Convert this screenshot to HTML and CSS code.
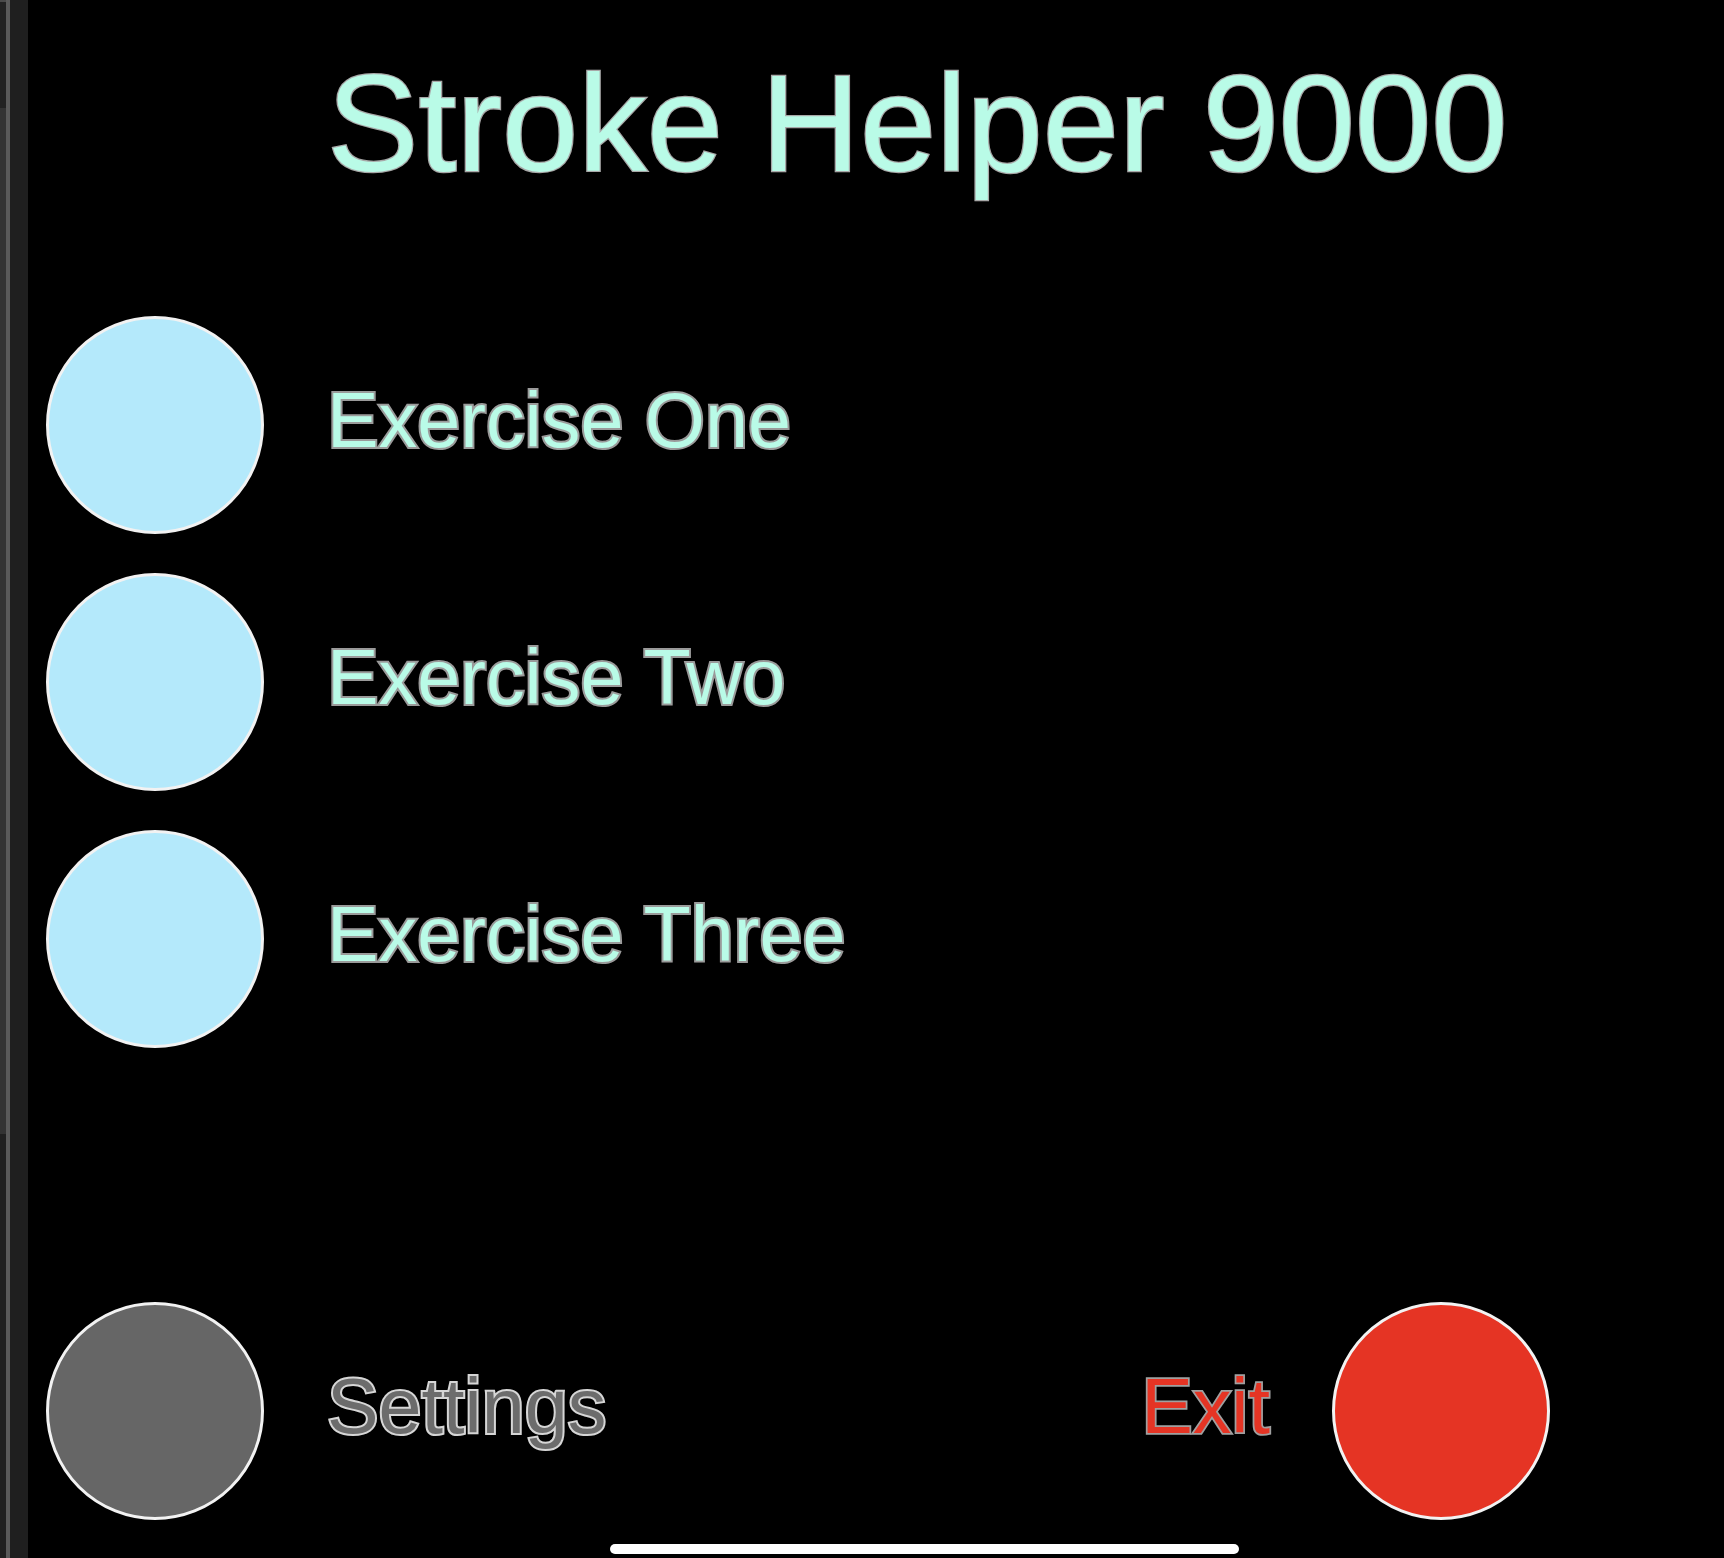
FILE: index.html
```html
<!DOCTYPE html>
<html lang="en">
<head>
<meta charset="utf-8">
<title>Stroke Helper 9000</title>
<link rel="stylesheet" href="styles.css">
</head>
<body>
  <div class="frame">
    <aside class="edge">
      <div class="edge-strip">
        <div class="strip-top"></div>
        <div class="strip-mid"></div>
        <div class="strip-bottom"></div>
      </div>
      <div class="edge-rail"></div>
      <div class="edge-gutter"></div>
    </aside>
    <main class="screen">
      <h1 class="title">Stroke Helper 9000</h1>
      <section class="menu">
        <div class="item">
          <div class="dot dot-blue"></div>
          <span class="label label-mint">Exercise One</span>
        </div>
        <div class="item">
          <div class="dot dot-blue"></div>
          <span class="label label-mint">Exercise Two</span>
        </div>
        <div class="item">
          <div class="dot dot-blue"></div>
          <span class="label label-mint">Exercise Three</span>
        </div>
      </section>
      <footer class="bottom">
        <div class="item">
          <div class="dot dot-gray"></div>
          <span class="label label-gray">Settings</span>
        </div>
        <div class="item item-exit">
          <span class="label label-red">Exit</span>
          <div class="dot dot-red"></div>
        </div>
      </footer>
      <div class="home-bar"></div>
    </main>
  </div>
</body>
</html>
```
FILE: styles.css
```css
html, body {
  margin: 0;
  padding: 0;
  background: #000;
  height: 1558px;
  overflow: hidden;
}

.frame {
  display: flex;
  height: 1558px;
}

.edge {
  display: flex;
  width: 28px;
  flex: none;
}

.edge-strip {
  width: 6px;
  display: flex;
  flex-direction: column;
}

.strip-top {
  height: 108px;
  background: #222;
  border-top: 2px solid #4a4a4a;
  box-sizing: border-box;
}

.strip-mid {
  height: 1026px;
  background: #333;
}

.strip-bottom {
  flex: 1;
  background: #202020;
}

.edge-rail {
  width: 4px;
  background: #5a5a5a;
}

.edge-gutter {
  width: 18px;
  background: #1f1f1f;
}

.screen {
  flex: 1;
  display: flex;
  flex-direction: column;
  padding-left: 18px;
  font-family: "Liberation Sans", Arial, Helvetica, sans-serif;
}

.title {
  margin: 55px 0 0 281px;
  font-size: 137px;
  line-height: 1;
  height: 137px;
  font-weight: 400;
  color: #b9fbe7;
  -webkit-text-stroke: 2.6px #a8a8a8;
  paint-order: stroke fill;
  white-space: nowrap;
}

.menu {
  margin-top: 124px;
  display: flex;
  flex-direction: column;
  gap: 39px;
}

.item {
  display: flex;
  align-items: center;
  gap: 63px;
}

.dot {
  width: 218px;
  height: 218px;
  border-radius: 50%;
  border: 3px solid #f2f2f2;
  box-sizing: border-box;
  flex: none;
}

.dot-blue {
  background: #b4e9fb;
}

.dot-gray {
  background: #666;
}

.dot-red {
  background: #e53424;
}

.label {
  font-size: 77.3px;
  line-height: 1;
  padding-bottom: 8px;
  white-space: nowrap;
  paint-order: stroke fill;
}

.label-mint {
  color: #b9fbe7;
  -webkit-text-stroke: 4px #9a9a9a;
}

.label-gray {
  color: #6c6c6c;
  -webkit-text-stroke: 4px #d6d6d6;
}

.label-red {
  color: #e53424;
  -webkit-text-stroke: 3.5px #a0a0a0;
}

.bottom {
  margin-top: 254px;
  margin-right: 174px;
  display: flex;
  justify-content: space-between;
  align-items: center;
}

.item-exit {
  gap: 62px;
}

.home-bar {
  margin: 24px 0 0 564px;
  width: 629px;
  height: 10px;
  border-radius: 5px;
  background: #fff;
}
```
